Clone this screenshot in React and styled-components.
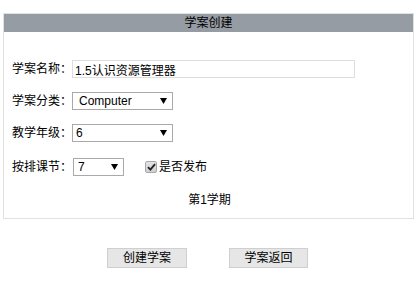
import React from "react";
import styled, { createGlobalStyle } from "styled-components";

const GlobalStyle = createGlobalStyle`
  html, body {
    margin: 0;
    padding: 0;
    background: #ffffff;
  }
  body {
    font-family: "Liberation Sans", "Noto Sans CJK SC", sans-serif;
    font-size: 12px;
    color: #000000;
  }
  * { box-sizing: border-box; }
`;

const Page = styled.div`
  width: 416px;
  padding: 13px 2px 0 3px;
`;

const Panel = styled.section`
  width: 411px;
  border: 1px solid #e1e1e1;
`;

const Header = styled.div`
  height: 18px;
  line-height: 18px;
  background: #959ca3;
  text-align: center;
  font-size: 12px;
  color: #000;
`;

const Body = styled.div`
  display: flex;
  flex-direction: column;
  gap: 14px;
  padding: 28px 8px 9px;
`;

const Row = styled.div`
  display: flex;
  align-items: center;
  height: 18px;
  margin-top: ${(p) => p.$mt || 0}px;
  justify-content: ${(p) => (p.$center ? "center" : "flex-start")};
  padding-left: ${(p) => (p.$center ? 2 : 0)}px;
`;

const Label = styled.span`
  width: 60px;
  line-height: 18px;
  white-space: nowrap;
`;

const TextInput = styled.input`
  width: 283px;
  height: 18px;
  border: 1px solid #dedede;
  padding: 0 2px;
  margin: 0;
  font-family: inherit;
  font-size: 12px;
  color: #000;
  outline: none;
  background: #fff;
`;

const SelectWrap = styled.div`
  position: relative;
  width: ${(p) => p.$w}px;
  height: 18px;
  margin-left: ${(p) => p.$ml || 0}px;
`;

const Select = styled.select`
  appearance: none;
  -webkit-appearance: none;
  width: 100%;
  height: 18px;
  margin: 0;
  border: 1px solid #a9a9a9;
  border-radius: 0;
  padding: 0 0 0 ${(p) => p.$pl || 4}px;
  font-family: inherit;
  font-size: 12px;
  color: #000;
  background: #fff;
  outline: none;
`;

const Arrow = styled.svg`
  position: absolute;
  right: 6px;
  top: 6px;
  pointer-events: none;
`;

const Check = styled.span`
  display: inline-flex;
  align-items: center;
  justify-content: center;
  width: 12px;
  height: 12px;
  margin-left: 21px;
  border: 1px solid #a8a8a8;
  border-radius: 2px;
  background: linear-gradient(#e4e4e4, #cfcfcf);
`;

const CheckText = styled.span`
  margin-left: 2px;
  line-height: 18px;
`;

const Term = styled.span`
  line-height: 18px;
`;

const Footer = styled.div`
  display: flex;
  justify-content: center;
  gap: 42px;
  margin-top: 29px;
  padding-right: 2px;
`;

const Button = styled.button`
  width: ${(p) => p.$w || 80}px;
  height: 20px;
  margin: 0;
  padding: 0;
  border: 1px solid #cfcfcf;
  background: #e6e6e6;
  font-family: inherit;
  font-size: 12px;
  color: #000;
  line-height: 18px;
`;

function Dropdown({ width, value, options, ml, pl }) {
  return (
    <SelectWrap $w={width} $ml={ml}>
      <Select defaultValue={value} $pl={pl}>
        {options.map((o) => (
          <option key={o} value={o}>
            {o}
          </option>
        ))}
      </Select>
      <Arrow width="7" height="6" viewBox="0 0 7 6">
        <polygon points="0,0 7,0 3.5,6" fill="#000" />
      </Arrow>
    </SelectWrap>
  );
}

export default function App() {
  return (
    <>
      <GlobalStyle />
      <Page>
        <Panel>
          <Header>学案创建</Header>
          <Body>
            <Row>
              <Label>学案名称：</Label>
              <TextInput defaultValue="1.5认识资源管理器" />
            </Row>
            <Row>
              <Label>学案分类：</Label>
              <Dropdown width={101} value="Computer" options={["Computer", "Math", "English"]} pl={6} />
            </Row>
            <Row>
              <Label>教学年级：</Label>
              <Dropdown width={101} value="6" options={["1", "2", "3", "4", "5", "6"]} pl={3} />
            </Row>
            <Row $mt={2}>
              <Label>按排课节：</Label>
              <Dropdown width={51} value="7" options={["1", "2", "3", "4", "5", "6", "7", "8"]} ml={1} pl={4} />
              <Check>
                <svg width="9" height="8" viewBox="0 0 9 8">
                  <path d="M1 4.2 L3.4 6.6 L8 1.2" stroke="#222" strokeWidth="1.8" fill="none" />
                </svg>
              </Check>
              <CheckText>是否发布</CheckText>
            </Row>
            <Row $mt={1} $center>
              <Term>第1学期</Term>
            </Row>
          </Body>
        </Panel>
        <Footer>
          <Button $w={80}>创建学案</Button>
          <Button $w={79}>学案返回</Button>
        </Footer>
      </Page>
    </>
  );
}
